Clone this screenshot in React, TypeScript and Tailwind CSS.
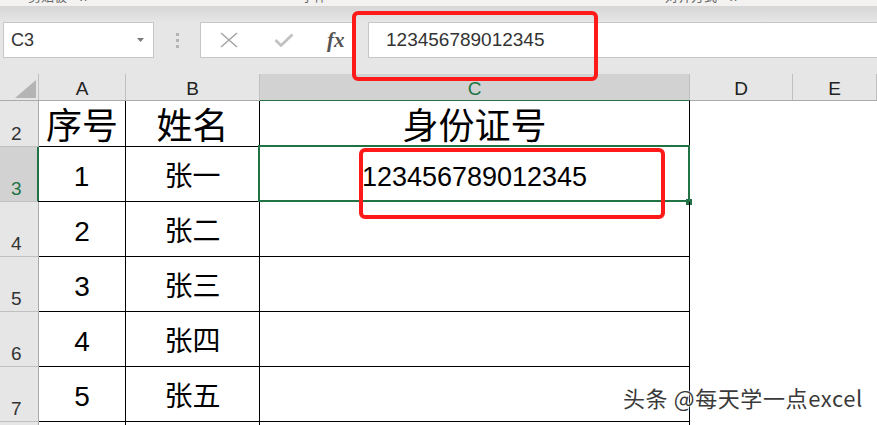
const rows = [
  { n: '2', h: 'h-[46px]', a: '序号', b: '姓名', c: '身份证号', head: true },
  { n: '3', h: 'h-[55px]', a: '1', b: '张一', c: '123456789012345', sel: true },
  { n: '4', h: 'h-[55px]', a: '2', b: '张二', c: '' },
  { n: '5', h: 'h-[55px]', a: '3', b: '张三', c: '' },
  { n: '6', h: 'h-[55px]', a: '4', b: '张四', c: '' },
  { n: '7', h: 'h-[55px]', a: '5', b: '张五', c: '' },
  { n: '8', h: 'h-[55px]', a: '', b: '', c: '' },
]

const cols = [
  { k: 'A', w: 'w-[87px]' },
  { k: 'B', w: 'w-[134px]' },
  { k: 'C', w: 'w-[430px]', on: true },
  { k: 'D', w: 'w-[103px]' },
  { k: 'E', w: 'w-[84px]' },
]

const App = () => {
  return (
    <div className="relative w-[877px] h-[425px] overflow-hidden bg-white font-['Liberation_Sans','Noto_Sans_CJK_SC',sans-serif] text-black">
      {/* ribbon remains */}
      <div className="h-[6px] overflow-hidden bg-[#f3f2f1] text-[13px] leading-none text-[#666]">
        <div className="flex -mt-[10px]">
          <span className="ml-[28px]">剪贴板　ᴙ</span>
          <span className="ml-[214px]">字体</span>
          <span className="ml-[338px]">对齐方式　ᴙ</span>
        </div>
      </div>
      <div className="h-[16px] bg-gradient-to-b from-[#d6d6d6] to-[#e6e6e6]" />

      {/* formula bar */}
      <div className="bg-[#e6e6e6]">
        <div className="flex h-[36px] pl-[3px]">
          <div className="flex w-[151px] items-center justify-between border border-[#c6c6c6] bg-white pl-[7px] pr-[9px]">
            <span className="text-[18px] text-[#333]">C3</span>
            <svg width="7" height="4" viewBox="0 0 7 4">
              <polygon points="0,0 7,0 3.5,4" fill="#7a7a7a" />
            </svg>
          </div>
          <div className="flex w-[46px] flex-col items-center justify-center gap-[3px]">
            <div className="h-[3px] w-[3px] bg-[#b3b3b3]" />
            <div className="h-[3px] w-[3px] bg-[#b3b3b3]" />
            <div className="h-[3px] w-[3px] bg-[#b3b3b3]" />
          </div>
          <div className="flex w-[154px] items-center border border-[#c6c6c6] bg-white">
            <svg width="20" height="16" viewBox="0 0 20 16" className="ml-[18px]">
              <path d="M2 1 L18 15 M18 1 L2 15" stroke="#a6a6a6" strokeWidth="1.6" fill="none" />
            </svg>
            <svg width="20" height="14" viewBox="0 0 20 14" className="ml-[35px]">
              <path d="M1.5 7 L7 12.5 L18.5 1.5" stroke="#c2c2c2" strokeWidth="2.8" fill="none" />
            </svg>
            <span className="ml-[33px] font-['Liberation_Serif',serif] text-[21px] italic font-bold leading-none text-[#555]">
              fx
            </span>
          </div>
          <div className="ml-[14px] flex flex-1 items-center border border-r-0 border-[#c6c6c6] bg-white pl-[17px]">
            <span className="text-[19px] text-[#333]">123456789012345</span>
          </div>
        </div>
        <div className="h-[16px]" />

        {/* column headers */}
        <div className="flex h-[27px] border-b border-[#ababab]">
          <div className="relative w-[39px] border-r border-[#c0c0c0]">
            <svg width="21" height="18" viewBox="0 0 21 18" className="absolute left-[15px] top-[6px]">
              <polygon points="21,0 21,18 0,18" fill="#b4b4b4" />
            </svg>
          </div>
          {cols.map((c) => (
            <div
              key={c.k}
              className={`${c.w} flex items-center justify-center border-r border-[#c0c0c0] pt-[3px] text-[19px] leading-none ${
                c.on ? 'bg-[#d2d2d2] text-[#217346]' : 'text-[#222]'
              }`}
            >
              {c.k}
            </div>
          ))}
        </div>
      </div>
      <div className="pointer-events-none -mt-[2px] ml-[260px] h-[2px] w-[430px] bg-[#217346]" />

      {/* grid rows */}
      {rows.map((r) => (
        <div key={r.n} className={`flex ${r.h}`}>
          <div
            className={`flex w-[39px] items-end border-b border-[#c0c0c0] pb-[3px] pl-[11px] text-[19px] leading-none ${
              r.sel
                ? 'border-r-2 border-r-[#217346] bg-[#d2d2d2] text-[#217346]'
                : 'border-r border-r-[#ababab] bg-[#e6e6e6] text-[#333]'
            }`}
          >
            {r.n}
          </div>
          <div
            className={`flex w-[87px] items-center justify-center border-r border-b border-black pt-[6px] leading-none ${
              r.head ? 'text-[36px]' : 'text-[28px]'
            } ${r.sel ? '-ml-px w-[88px]' : ''}`}
          >
            {r.a}
          </div>
          <div
            className={`flex w-[134px] items-center justify-center border-r border-b border-black pt-[6px] leading-none ${
              r.head ? 'text-[36px]' : 'text-[28px]'
            }`}
          >
            {r.b}
          </div>
          <div
            className={`relative flex w-[430px] items-center justify-center border-r border-b border-black pt-[6px] leading-none ${
              r.head ? 'text-[36px]' : 'text-[27px]'
            }`}
          >
            {r.c}
            {r.sel && (
              <>
                <div className="absolute -left-[2px] -top-[2px] -right-[1px] -bottom-[1px] border-2 border-[#217346]" />
                <div className="absolute -right-[3px] -bottom-[4px] h-[6px] w-[6px] bg-[#217346]" />
              </>
            )}
          </div>
        </div>
      ))}

      {/* annotations */}
      <div className="absolute left-[352px] top-[11px] h-[70px] w-[246px] rounded-[6px] border-4 border-[#ff1a1a]" />
      <div className="absolute left-[359px] top-[148px] h-[71px] w-[306px] rounded-[6px] border-4 border-[#ff1a1a]" />
      <div className="absolute left-[623px] top-[386px] font-['Noto_Sans_CJK_SC',sans-serif] text-[22px] tracking-[0.6px] leading-none text-[#3a3a3a] [text-shadow:0_0_2px_#fff,0_0_2px_#fff,0_0_2px_#fff]">
        头条 @每天学一点excel
      </div>
    </div>
  )
}

export default App
